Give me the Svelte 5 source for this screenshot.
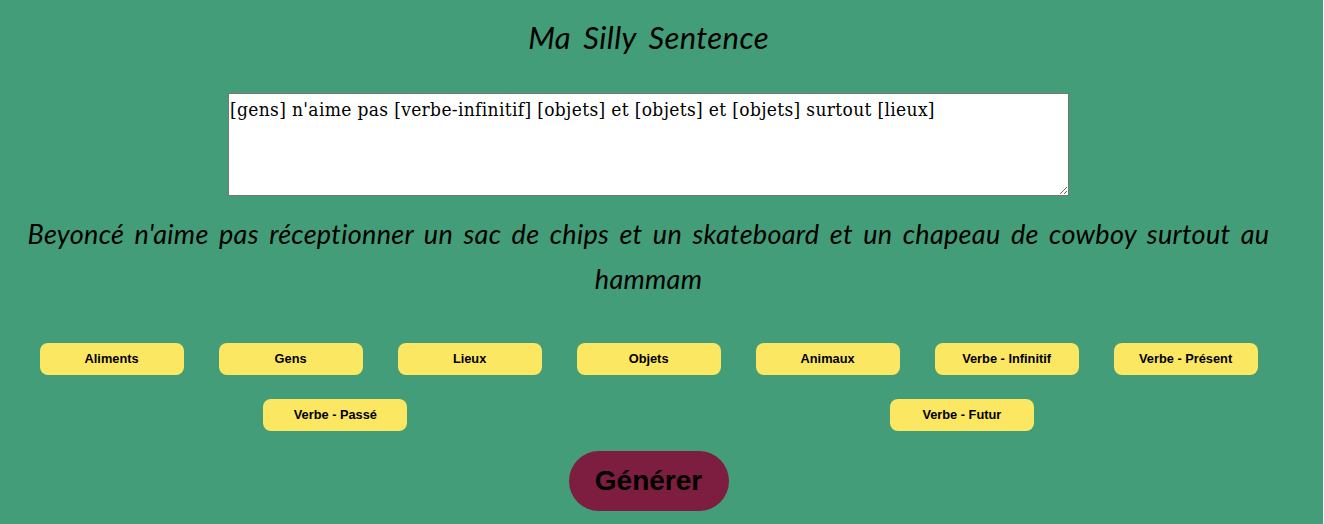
<script>
  let template = $state("[gens] n'aime pas [verbe-infinitif] [objets] et [objets] et [objets] surtout [lieux]");
  const sentence = "Beyoncé n'aime pas réceptionner un sac de chips et un skateboard et un chapeau de cowboy surtout au hammam";
  const categories = [
    { label: 'Aliments', tag: '[aliments]' },
    { label: 'Gens', tag: '[gens]' },
    { label: 'Lieux', tag: '[lieux]' },
    { label: 'Objets', tag: '[objets]' },
    { label: 'Animaux', tag: '[animaux]' },
    { label: 'Verbe - Infinitif', tag: '[verbe-infinitif]' },
    { label: 'Verbe - Présent', tag: '[verbe-présent]' },
    { label: 'Verbe - Passé', tag: '[verbe-passé]' },
    { label: 'Verbe - Futur', tag: '[verbe-futur]' }
  ];
</script>

<main>
  <h1>Ma Silly Sentence</h1>
  <textarea spellcheck="false" bind:value={template}></textarea>
  <p class="sentence">{sentence}</p>
  <div class="categories">
    {#each categories as c}
      <button class="category" onclick={() => (template += ' ' + c.tag)}>{c.label}</button>
    {/each}
  </div>
  <button class="generate">Générer</button>
</main>

<style>
  :global(body) {
    background: #fff;
    overflow: hidden;
  }
  main {
    box-sizing: border-box;
    width: 1323px;
    height: 524px;
    padding: 14px 26px 0 0;
    background: #429d78;
    color: #000;
    display: flex;
    flex-direction: column;
    align-items: center;
  }
  h1 {
    margin: 0;
    height: 79px;
    font: italic 400 31px/46px Lato, sans-serif;
    letter-spacing: 0.4px;
    word-spacing: 4.6px;
    white-space: nowrap;
  }
  textarea {
    box-sizing: border-box;
    display: block;
    flex: none;
    width: 841px;
    height: 103px;
    margin: 0;
    padding: 2px 2px 2px 1px;
    border: 1px solid #767676;
    border-radius: 0;
    background: #fff;
    color: #000;
    font: 19px/27px "DejaVu Serif Condensed", "DejaVu Serif", serif;
    font-stretch: condensed;
    letter-spacing: 0.34px;
    resize: both;
    outline: none;
  }
  .sentence {
    margin: 15px 0 0;
    width: 1254px;
    height: 117px;
    flex: none;
    font: italic 400 27px/45px Lato, sans-serif;
    letter-spacing: 0.3px;
    word-spacing: 3.75px;
    text-align: center;
  }
  .categories {
    width: 1253px;
    margin-left: 0.2px;
    display: flex;
    flex-wrap: wrap;
    justify-content: space-around;
    padding-top: 3px;
  }
  button {
    border: 0;
    padding: 0;
    color: #000;
    font-family: "Liberation Sans", Arial, sans-serif;
    font-weight: 700;
  }
  .category {
    width: 144px;
    height: 32px;
    margin: 12px;
    padding-bottom: 2px;
    border-radius: 8px;
    background: #fce762;
    font-size: 12.8px;
  }
  .generate {
    flex: none;
    width: 160px;
    height: 60px;
    margin-top: 8px;
    border-radius: 30px;
    background: #7d1d3f;
    font-size: 28px;
  }
</style>
